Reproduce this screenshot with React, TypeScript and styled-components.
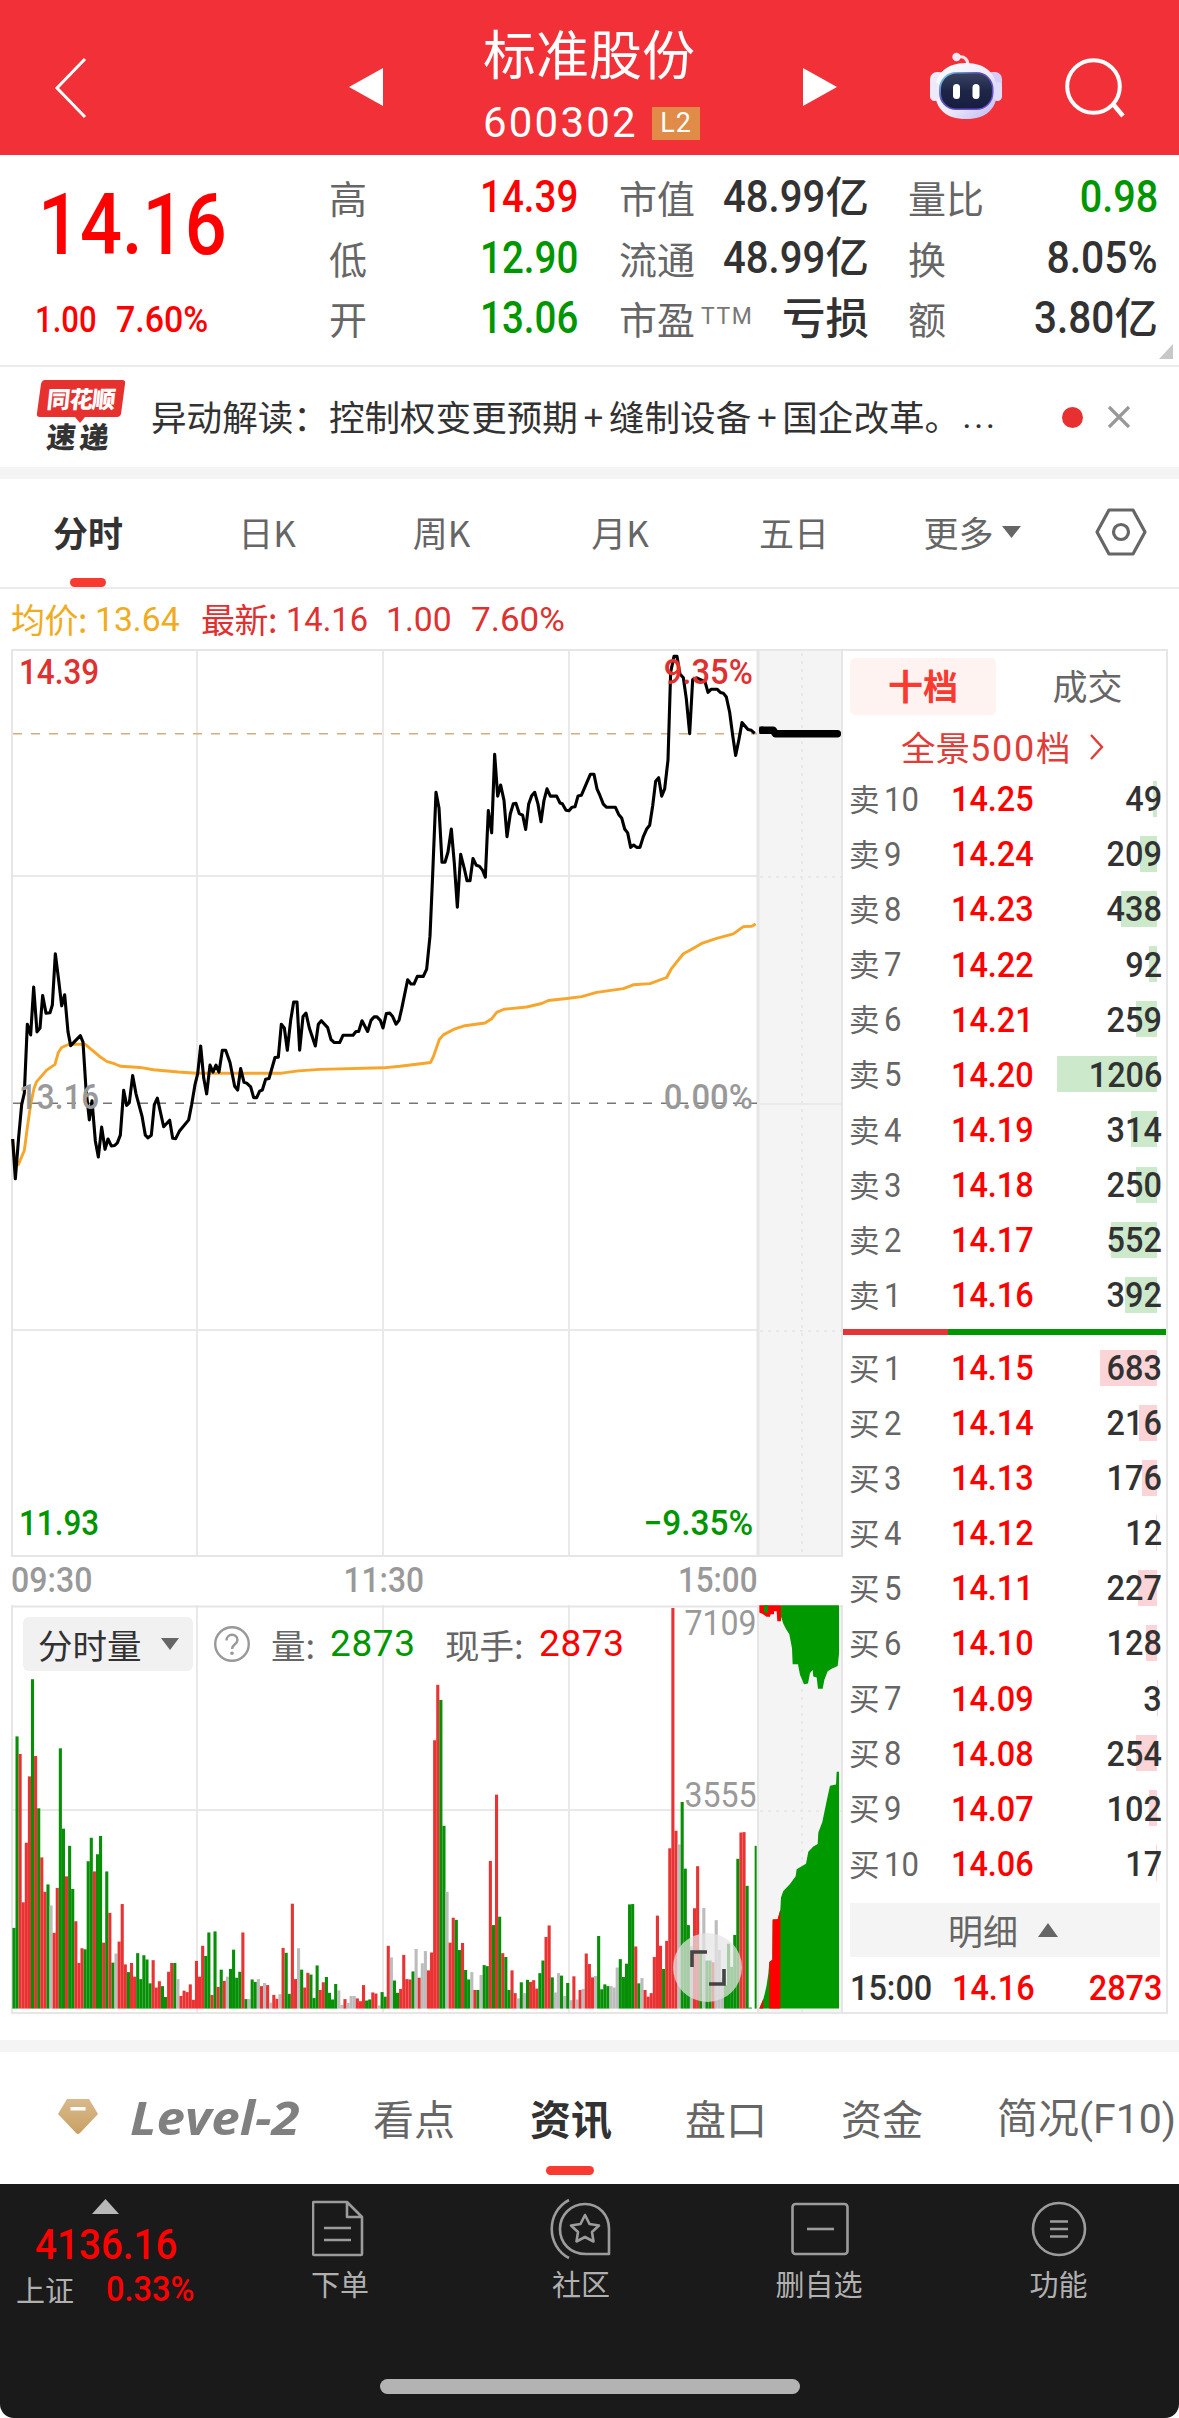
import React from 'react';
import styled, { createGlobalStyle, css } from 'styled-components';

const RED = '#ff0000';
const GREEN = '#009600';
const INK = '#323232';
const MUTED = '#666';
const LINE = '#e9e9e9';
const CJK = "'Noto Sans CJK SC', sans-serif";
const NUM = "Roboto, 'Noto Sans CJK SC', sans-serif";

const Global = createGlobalStyle`
  * { box-sizing: border-box; }
  html, body { margin: 0; padding: 0; background: #fff; }
  body { width: 1179px; font-family: ${CJK}; color: ${INK}; }
  svg { display: block; flex: none; }
`;

const Screen = styled.div`
  width: 1179px;
  height: 2418px;
  display: flex;
  flex-direction: column;
  overflow: hidden;
  background: #fff;
`;

/* Numerals: Roboto narrowed towards a DIN-like proportion. */
const Num = styled.span<{ $size: number; $sx?: number; $color?: string; $w?: number; $ml?: number; $right?: boolean; $center?: boolean }>`
  display: inline-block;
  font-family: ${NUM};
  font-size: ${p => p.$size}px;
  line-height: 1;
  font-weight: ${p => p.$w ?? 500};
  color: ${p => p.$color ?? INK};
  margin-left: ${p => p.$ml ?? 0}px;
  white-space: nowrap;
  transform: scaleX(${p => p.$sx ?? 0.9});
  transform-origin: ${p => (p.$center ? 'center' : p.$right ? 'right center' : 'left center')};
`;

/* ---------- header ---------- */
const Header = styled.header`
  height: 155px;
  flex: none;
  background: #f23037;
  color: #fff;
  display: grid;
  grid-template-columns: 349px 134px 320px 127px 249px;
`;
const BackCell = styled.div`padding: 57px 0 0 54px;`;
const ArrowCell = styled.div`padding-top: 68px;`;
const TitleCell = styled.div`display: flex; flex-direction: column;`;
const Title = styled.h1`
  margin: 23px 0 0;
  font-size: 53px;
  line-height: 58px;
  font-weight: 400;
  white-space: nowrap;
`;
const CodeRow = styled.div`display: flex; align-items: center; gap: 15px; margin-top: 20px; height: 44px;`;
const Code = styled.span`font-family: ${NUM}; font-size: 42px; letter-spacing: 2.2px; line-height: 44px; font-weight: 400; width: 154px;`;
const Badge = styled.span`
  width: 48px; height: 33px; line-height: 33px; background: #e08c48; text-align: center;
  font-family: ${NUM}; font-size: 27px; letter-spacing: 1px; font-weight: 400;
`;
const Tools = styled.div`display: flex;`;
const ToolIcon = styled.div<{ $ml?: number }>`padding-top: 50px; margin-left: ${p => p.$ml ?? 0}px;`;

/* ---------- quote ---------- */
const Quote = styled.section`
  position: relative;
  height: 212px;
  flex: none;
  border-bottom: 2px solid #ebebeb;
  display: grid;
  grid-template-columns: 329px 290px 289px 271px;
`;
const Last = styled.div`padding: 25px 0 0 38px; display: flex; flex-direction: column;`;
const Big = styled.div`height: 90px; display: flex; align-items: center;`;
const Changes = styled.div`display: grid; grid-template-columns: 81px 100px; margin: 32px 0 0 -3px; height: 36px; align-items: center;`;
const Stats = styled.div<{ $pr: number }>`
  display: flex; flex-direction: column; padding: 12px ${p => p.$pr}px 0 0;
`;
const Stat = styled.div`
  height: 60.5px; display: flex; justify-content: space-between; align-items: center;
`;
const StatLabel = styled.span`font-size: 38px; line-height: 56px; color: ${MUTED}; white-space: nowrap; display: flex;`;
const Sup = styled.sup`font-family: ${NUM}; font-size: 23px; line-height: 23px; margin: 15px 0 0 6px; font-weight: 400; letter-spacing: 1.5px; color: #777;`;
const StatValue = styled.span<{ $c?: string }>`
  font-family: ${NUM}; font-weight: 500; font-size: 44px; line-height: 52px; color: ${p => p.$c ?? INK};
  white-space: nowrap; display: flex; align-items: center;
`;
const Digits = styled.span<{ $sx?: number }>`transform: scaleX(${p => p.$sx ?? 0.875}); transform-origin: right center;`;
const Unit = styled.span`font-family: ${CJK}; font-size: 43.5px; line-height: 52px; font-weight: 500; margin-top: -5px;`;
const Corner = styled.svg`position: absolute; right: 6px; bottom: 6px;`;

/* ---------- news ticker ---------- */
const Ticker = styled.section`
  height: 100px; flex: none; display: flex; align-items: center; padding-left: 36px;
`;
const Brand = styled.div`position: relative; width: 90px; height: 74px; margin-right: 25px;`;
const BrandTop = styled.span`
  position: absolute; left: 11px; top: 0; color: #fff; font-weight: 900; font-size: 23.5px; line-height: 36px;
  transform: skewX(-6deg); letter-spacing: -0.8px; white-space: nowrap;
`;
const BrandBottom = styled.span`
  position: absolute; left: 11px; top: 39px; color: #333; font-weight: 900; font-size: 29px; line-height: 32px;
  transform: skewX(-6deg); letter-spacing: 4px; white-space: nowrap;
`;
const News = styled.p`margin: -2px 0 0; width: 848px; font-size: 35.6px; line-height: 50px; white-space: nowrap; overflow: hidden; display: flex;`;
const Plus = styled.span`width: 31px; text-align: center;`;
const Dots = styled.span`font-family: ${NUM}; letter-spacing: 2.4px; margin-left: 2px;`;
const Dot = styled.i`width: 21px; height: 21px; border-radius: 50%; background: #e93030; margin: 0 24px 0 63px;`;

const Band = styled.div`height: 12px; flex: none; background: #f4f4f4;`;

/* ---------- period tabs ---------- */
const Tabs = styled.nav`
  height: 110px; flex: none; border-bottom: 2px solid #ebebeb; display: grid;
  grid-template-columns: 176px 182px 167px 190px 158px 198px 99px;
`;
const Tab = styled.div<{ $on?: boolean }>`
  position: relative; display: flex; justify-content: center; align-items: center; gap: 8px;
  font-size: 35px; line-height: 50px; padding-bottom: 3px; color: ${p => (p.$on ? INK : MUTED)}; font-weight: ${p => (p.$on ? 700 : 400)};
  ${p => p.$on && css`
    &::after { content: ''; position: absolute; left: 70px; bottom: 0; width: 36px; height: 9px; border-radius: 5px; background: #f93a30; }
  `}
`;

const Legend = styled.div`
  height: 60px; flex: none; display: grid; grid-template-columns: 72px 108px 84px 101px 84px 110px;
  align-items: center; padding: 0 0 1px 11px; white-space: nowrap;
`;
const LegendText = styled.span<{ $c: string; $ml?: number }>`font-size: 34px; line-height: 44px; letter-spacing: -0.5px; color: ${p => p.$c}; margin-left: ${p => p.$ml ?? 0}px;`;

/* ---------- main area ---------- */
const Main = styled.main`height: 1391px; flex: none; display: flex; padding-left: 11px;`;
const Charts = styled.div`width: 832px; flex: none; display: flex; flex-direction: column;`;
const PriceBox = styled.div`position: relative; height: 908px;`;
const Axis = styled.div`height: 48px; padding-bottom: 1px; display: grid; grid-template-columns: 248px 248px 251px; align-items: center;`;
const AxisCell = styled.div<{ $a: string }>`display: flex; justify-content: ${p => p.$a};`;
const VolBox = styled.div`position: relative; height: 410px;`;
const Tag = styled.div<{ $y: number; $left?: number; $right?: number }>`
  position: absolute; top: ${p => p.$y}px; height: 34px; line-height: 34px; display: flex; align-items: center;
  ${p => (p.$left !== undefined ? `left: ${p.$left}px;` : `right: ${p.$right}px;`)}
`;
const VolHead = styled.div`
  position: absolute; left: 12px; top: 12px; height: 54px; display: flex; align-items: center; white-space: nowrap;
`;
const Picker = styled.button`
  width: 170px; height: 54px; border: 0; border-radius: 6px; background: #f1f1f1; padding: 0 14px 0 15px; margin: 0;
  display: flex; align-items: center; justify-content: space-between; color: ${INK}; font-family: ${CJK}; font-size: 34.5px; line-height: 50px;
`;
const VolLabel = styled.span<{ $ml: number; $w: number }>`margin-left: ${p => p.$ml}px; width: ${p => p.$w}px; font-size: 34.5px; line-height: 50px; color: ${MUTED};`;
const VolValue = styled.span<{ $c: string }>`font-family: ${NUM}; font-size: 37px; line-height: 50px; letter-spacing: 0.6px; width: 84px; color: ${p => p.$c};`;
const Help = styled.svg`margin-left: 20px;`;
const Expand = styled.div`
  position: absolute; left: 662px; top: 328px; width: 69px; height: 69px; border-radius: 50%;
  background: rgba(228, 228, 228, 0.72); display: flex; align-items: center; justify-content: center;
`;

/* ---------- order book ---------- */
const Book = styled.aside`
  width: 325px; flex: none; height: 1365px; border: 2px solid #e6e6e6; border-left-width: 0; border-right-width: 2px;
`;
const BookTabs = styled.div`height: 71px; display: grid; grid-template-columns: 146px 1fr; padding: 7px 0 7px 7px;`;
const BookTab = styled.div<{ $on?: boolean }>`
  display: flex; align-items: center; justify-content: center; font-size: 35px; line-height: 54px; border-radius: 5px; padding-bottom: 3px;
  background: ${p => (p.$on ? '#fff3f2' : 'transparent')}; color: ${p => (p.$on ? '#f93a30' : MUTED)}; font-weight: ${p => (p.$on ? 700 : 400)};
  padding-left: ${p => (p.$on ? 0 : 13)}px;
`;
const Panorama = styled.div`
  height: 50px; display: flex; align-items: center; padding-left: 58px; gap: 18px; color: #e33b36; font-size: 34.5px; line-height: 50px; white-space: nowrap;
`;
const Five = styled.span`font-family: ${NUM}; font-size: 36px; font-weight: 400; letter-spacing: 1.8px;`;
const Row = styled.div`position: relative; height: 55.08px; display: grid; grid-template-columns: 35px 66px 1fr 4px; align-items: center; padding-left: 6px;`;
const Side = styled.span`font-size: 30.5px; line-height: 50px; color: ${MUTED}; margin-top: -3px;`;
const Qty = styled.span`position: relative; display: flex; justify-content: flex-end; width: 100%;`;
const PriceQty = styled.div`display: grid; grid-template-columns: 88px 1fr; align-items: center;`;
const Fill = styled.i<{ $buy?: boolean }>`
  position: absolute; right: 9px; top: 9px; height: 36px; background: ${p => (p.$buy ? '#fad4d6' : '#cce9cc')};
`;
const Ratio = styled.div`height: 6px; background: linear-gradient(90deg, #e33535 105px, ${GREEN} 105px); margin: 6px 0;`;
const Detail = styled.div`
  height: 54px; margin: 11px 6px 0 7px; background: #f4f4f4; color: ${MUTED}; font-size: 35px; line-height: 54px;
  display: flex; align-items: center; justify-content: center; gap: 20px; padding-right: 4px;
`;
const Tick = styled.div`height: 60px; display: grid; grid-template-columns: 101px 88px 1fr 4px; align-items: center; padding: 4px 0 0 7px;`;
const TickQty = styled.span`display: flex; justify-content: flex-end;`;

/* ---------- lower tabs ---------- */
const InfoTabs = styled.nav`
  height: 132px; flex: none; display: grid; grid-template-columns: 130px 243px 157px 155px 156px 156px 182px; align-items: center; white-space: nowrap;
  font-size: 41px; line-height: 60px; color: ${MUTED}; padding-bottom: 2px;
`;
const GemCell = styled.div`padding-left: 58px;`;
const LevelTwo = styled.span`font-family: 'Open Sans', sans-serif; font-weight: 700; font-style: italic; font-size: 47px; color: #808080; transform: scaleX(1.09); transform-origin: left;`;
const InfoTab = styled.span<{ $on?: boolean }>`
  position: relative; ${p => p.$on && css`
    color: ${INK}; font-weight: 700;
    &::after { content: ''; position: absolute; left: 16px; bottom: -28px; width: 48px; height: 9px; border-radius: 5px; background: #f93a30; }
  `}
`;
const F10 = styled.span`font-family: ${NUM}; font-size: 41px; font-weight: 400; letter-spacing: 0;`;

/* ---------- bottom bar ---------- */
const Bottom = styled.footer`
  height: 234px; flex: none; background: #1a1a1a; border-radius: 0 0 14px 14px; display: flex; flex-direction: column; align-items: center; justify-content: space-between;
  padding-bottom: 24px;
`;
const BottomRow = styled.div`width: 1179px; height: 140px; display: grid; grid-template-columns: 222px 236px 246px 230px 249px;`;
const Index = styled.div`display: flex; flex-direction: column; padding: 15px 0 0 0;`;
const IndexTri = styled.svg`margin-left: 92px;`;
const IndexNum = styled.div`height: 46px; padding-left: 35px; margin-top: 8px; display: flex; align-items: center;`;
const IndexLine = styled.div`display: grid; grid-template-columns: 90px 100px; padding-left: 16px; margin-top: 2px; align-items: center; height: 38px; color: #b0b0b0; font-size: 29px; line-height: 38px;`;
const Action = styled.div`display: flex; flex-direction: column; align-items: center; padding-top: 14px; color: #b0b0b0; font-size: 29px; line-height: 40px; gap: 3px;`;
const HomeBar = styled.div`width: 420px; height: 15px; border-radius: 8px; background: #b3b3b3;`;

/* ---------- data ---------- */
const SELL: [number, string, number][] = [
  [10, '14.25', 49], [9, '14.24', 209], [8, '14.23', 438], [7, '14.22', 92], [6, '14.21', 259],
  [5, '14.20', 1206], [4, '14.19', 314], [3, '14.18', 250], [2, '14.17', 552], [1, '14.16', 392],
];
const BUY: [number, string, number][] = [
  [1, '14.15', 683], [2, '14.14', 216], [3, '14.13', 176], [4, '14.12', 12], [5, '14.11', 227],
  [6, '14.10', 128], [7, '14.09', 3], [8, '14.08', 254], [9, '14.07', 102], [10, '14.06', 17],
];

/* Minute price and average, in plot units. */
const PRICE =
  '38,1330 46,1434 56,1325 65,1240 73,1210 82,1030 92,1058 101,933 111,1050 120,1040 128,955 138,1001 150,1000 157,980 166,846 176,915 185,982 194,953 204,1050 212,1086 241,1060 249,1077 258,1200 268,1280 276,1230 286,1335 295,1377 305,1299 315,1357 324,1330 334,1348 344,1347 352,1340 361,1320 371,1203 380,1242 388,1235 398,1164 408,1212 426,1270 436,1320 444,1327 454,1320 463,1240 472,1223 491,1298 509,1281 518,1328 527,1329 538,1310 566,1280 575,1240 585,1188 593,1160 602,1087 611,1170 620,1212 630,1137 639,1155 648,1137 657,1155 667,1098 677,1098 690,1130 704,1192 713,1202 722,1146 732,1182 740,1184 752,1194 761,1222 770,1222 779,1205 787,1202 797,1174 807,1172 825,1117 835,1116 844,1030 853,1040 862,1098 872,1020 881,972 891,972 899,1098 909,1010 918,1001 928,1040 946,1087 955,1030 964,1021 983,1039 993,1070 1003,1078 1019,1078 1029,1059 1059,1059 1068,1049 1076,1049 1086,1021 1103,1049 1113,1020 1122,1011 1131,1011 1141,1020 1149,1040 1159,1002 1169,1001 1178,1010 1188,1030 1197,1020 1205,990 1223,914 1233,925 1242,925 1252,905 1270,905 1280,886 1290,800 1298,640 1308,424 1317,465 1326,607 1335,607 1344,580 1354,520 1363,610 1372,724 1382,586 1392,620 1401,655 1410,655 1419,597 1429,615 1438,617 1448,628 1456,646 1465,472 1475,530 1484,325 1493,434 1502,405 1512,445 1521,540 1531,480 1540,454 1548,453 1558,480 1568,484 1577,521 1586,455 1595,433 1604,424 1614,455 1623,501 1632,445 1641,415 1651,434 1670,434 1680,452 1687,454 1698,471 1707,472 1716,463 1725,462 1734,434 1744,432 1771,377 1782,377 1791,415 1800,433 1810,455 1819,463 1846,463 1856,482 1865,491 1874,520 1883,530 1892,568 1901,562 1910,568 1920,568 1930,540 1940,520 1949,510 1958,460 1967,395 1976,386 1985,434 1994,415 2004,340 2012,110 2022,69 2031,69 2040,115 2050,125 2059,180 2069,271 2078,130 2090,125 2115,135 2124,163 2133,155 2152,155 2161,163 2170,165 2179,175 2189,215 2198,275 2207,328 2217,285 2226,242 2244,260 2254,262 2264,270';
const AVERAGE =
  '38,1330 45,1390 55,1397 73,1360 82,1300 92,1240 102,1198 110,1180 140,1150 165,1135 175,1104 185,1091 205,1083 255,1082 297,1113 320,1127 345,1134 362,1140 420,1143 460,1149 535,1155 590,1158 845,1158 895,1152 960,1148 1150,1144 1200,1140 1292,1130 1300,1115 1318,1070 1330,1058 1365,1042 1395,1034 1455,1027 1475,1016 1490,999 1512,991 1580,985 1625,976 1645,968 1700,963 1745,958 1790,947 1870,937 1900,927 1950,924 2000,908 2015,884 2050,846 2070,837 2105,819 2150,806 2200,794 2230,775 2255,774 2267,768';

/* One entry per minute: direction (R up, G down, N flat) and bar top in plot units. */
const VOLUME = (
  'G1277 G731 R781 R1204 R1034 R845 G568 R787 G936 R1076 R1174 G1153 N1213 R1291 R1163 G765 G994 R1130 G1043 G1166 R1258 R1377 R1335 G1338 G1087 G1020 R1116 G1067 G1015 R1319 G1116 R1234 G1376 N1350 R1316 R1209 R1381 G1403 R1377 R1416 G1349 G1423 G1355 G1367 G1435 R1369 R1447 R1429 G1443 G1474 R1402 R1377 G1377 N1423 R1471 R1456 R1460 R1438 R1482 R1371 R1416 R1328 G1357 G1290 R1468 G1287 R1445 G1396 R1428 N1416 G1394 G1339 G1419 G1402 R1290 G1480 N1480 G1424 G1431 N1423 R1443 N1434 R1440 N1490 R1468 R1479 N1466 R1334 G1348 G1465 R1208 R1423 N1335 G1396 R1447 R1405 G1410 G1477 G1384 R1454 R1432 G1417 G1462 G1481 G1437 N1455 N1497 R1480 N1491 N1471 N1471 R1478 R1486 R1440 G1484 G1481 R1461 R1464 N1498 G1460 G1473 R1328 N1361 G1427 G1462 R1451 R1354 R1423 R1424 G1401 N1337 R1419 N1378 N1343 R1398 R1347 R742 R584 G627 G986 N1174 R1319 R1248 G1254 G1340 R1320 G1397 G1424 N1403 R1454 G1454 N1411 G1383 G1386 R1086 G1269 R897 G1245 R1349 G1360 G1454 R1398 R1463 N1478 G1432 N1463 G1425 R1431 R1426 R1450 G1406 G1370 R1303 R1270 G1418 N1461 N1406 G1413 N1471 G1434 N1483 R1415 N1481 R1454 N1451 R1350 R1380 R1418 N1414 G1300 G1452 G1438 G1443 N1443 N1447 N1390 G1366 G1417 G1379 G1210 G1209 R1330 G1435 N1420 R1454 R1473 R1463 R1360 R1242 R1328 G1394 R1314 R1050 R365 R1000 N1039 G918 G1108 G1269 N1330 R1221 R1101 G1340 N1220 G1370 G1370 R1375 N1255 N1340 N1420 G1440 G1322 G1388 G1297 G1080 R1005 R1004 G1157 G1504'
).split(' ');
const BAR_COLOR: Record<string, string> = { R: '#e93333', G: '#079007', N: '#bcbcbc' };

const grid = (h: number, ys: number[]) => (
  <g stroke={LINE} strokeWidth="2">
    {[186, 372, 558].map(x => <line key={x} x1={x} x2={x} y1={0} y2={h} />)}
    {ys.map(y => <line key={y} x1={0} x2={746} y1={y} y2={y} />)}
  </g>
);

const PriceChart = () => (
  <svg width="832" height="908" viewBox="0 0 832 908">
    <rect x="747" y="0" width="84" height="908" fill="#f4f4f4" />
    {grid(908, [227, 681])}
    <g stroke="#e8e8e8" strokeWidth="2" strokeDasharray="3 5">
      <line x1="791" x2="791" y1="4" y2="908" />
      <line x1="749" x2="830" y1="228" y2="228" />
      <line x1="749" x2="830" y1="682" y2="682" />
    </g>
    <line x1="749" x2="830" y1="455" y2="455" stroke="#eaeaea" strokeWidth="2" />
    <g fill="none" stroke="#e6e6e6" strokeWidth="2">
      <path d="M0 1H832M1 0V908M0 907H830M831 0V908" />
      <path d="M747 0V908" strokeWidth="3" />
    </g>
    <line x1="2" x2="746" y1="84.700" y2="84.700" stroke="#cfb07c" strokeWidth="1.600" strokeDasharray="9 9" />
    <line x1="2" x2="746" y1="454.200" y2="454.200" stroke="#777" strokeWidth="1.500" strokeDasharray="9 9" />
    <g transform="translate(-11 -19) scale(0.33333 0.38271)" fill="none" strokeLinejoin="round">
      <polyline points={AVERAGE} stroke="#f7a52b" strokeWidth="2.900" vectorEffect="non-scaling-stroke" />
      <polyline points={PRICE} stroke="#000" strokeWidth="3.100" vectorEffect="non-scaling-stroke" />
      <polyline points="2288,262 2320,262 2326,271 2512,271" stroke="#000" strokeWidth="7.500" strokeLinecap="round" vectorEffect="non-scaling-stroke" />
      <polyline points="2278,262 2290,262" stroke="#000" strokeWidth="7.500" vectorEffect="non-scaling-stroke" />
    </g>
  </svg>
);

const VolumeChart = () => (
  <svg width="832" height="410" viewBox="0 0 832 410">
    <rect x="747" y="0" width="84" height="408" fill="#f4f4f4" />
    {grid(408, [205])}
    <g stroke="#e8e8e8" strokeWidth="2" strokeDasharray="3 5">
      <line x1="791" x2="791" y1="4" y2="408" />
      <line x1="749" x2="830" y1="206" y2="206" />
    </g>
    <path d="M0 1.500H832M1 0V408M0 408H832M831 0V408M747 0V408" fill="none" stroke="#e6e6e6" strokeWidth="2" />
    <g transform="translate(-11 -125) scale(0.33333 0.35075)">
      {VOLUME.map((v, i) => {
        const top = Number(v.slice(1));
        return <rect key={i} x={37.2 + i * 9.281} y={top} width="9.3" height={1507 - top} fill={BAR_COLOR[v[0]]} />;
      })}
      <rect x="2264" y="1043" width="6" height="464" fill="#079007" />
      <path fill="#009900" d="M2278 1507 L2290 1480 L2295 1462 L2300 1440 L2305 1408 L2308 1374 L2317 1368 L2318 1253 L2333 1252 L2341 1225 L2343 1190 L2350 1172 L2370 1152 L2387 1130 L2390 1110 L2418 1094 L2425 1060 L2440 1045 L2453 1038 L2455 1005 L2467 975 L2480 915 L2490 872 L2508 868 L2510 832 L2517 832 V1507Z" />
      <path fill="#ff0000" d="M2308 1507V1374L2317 1368L2318 1253L2333 1252L2341 1225V1507ZM2278 1507L2290 1480V1507Z" />
      <path fill="#009900" d="M2343 357H2517V497L2513 530L2495 538L2483 545L2473 570L2468 595H2454L2450 563L2440 560L2438 542L2430 550L2424 580L2412 582L2400 555L2394 525H2378L2376 480L2368 440L2358 425L2350 410L2343 390Z" />
      <path fill="#ff0000" d="M2278 357V378L2288 382L2300 390H2310L2312 383H2322V374H2330L2332 403H2343V357Z" />
      <rect x="2292" y="357" width="12" height="21" fill="#009900" />
    </g>
  </svg>
);

const Triangle = ({ w, h, dir, fill }: { w: number; h: number; dir: 'l' | 'r' | 'u' | 'd'; fill: string }) => {
  const d = { l: `M${w} 0V${h}L0 ${h / 2}Z`, r: `M0 0V${h}L${w} ${h / 2}Z`, u: `M0 ${h}H${w}L${w / 2} 0Z`, d: `M0 0H${w}L${w / 2} ${h}Z` }[dir];
  return <svg width={w} height={h}><path d={d} fill={fill} /></svg>;
};

const Robot = () => (
  <svg width="76" height="72" viewBox="0 0 76 72">
    <defs>
      <linearGradient id="shell" x1="0" y1="0" x2="1" y2="1"><stop offset="0" stopColor="#fff" /><stop offset=".55" stopColor="#eceafa" /><stop offset="1" stopColor="#bdb4f2" /></linearGradient>
      <linearGradient id="rim" x1="0" y1="0" x2="1" y2="1"><stop offset="0" stopColor="#7ee6f0" /><stop offset=".4" stopColor="#5b50b8" /><stop offset="1" stopColor="#6a4fe0" /></linearGradient>
      <linearGradient id="visor" x1="0" y1="0" x2="0" y2="1"><stop offset="0" stopColor="#3a4160" /><stop offset=".5" stopColor="#1e2648" /><stop offset="1" stopColor="#171d40" /></linearGradient>
    </defs>
    <path d="M28 7C34 6 37 8 38 14" fill="none" stroke="#fbe3ea" strokeWidth="3.200" />
    <circle cx="26.500" cy="7" r="4.200" fill="#f3e9f6" />
    <rect x="0" y="22" width="16" height="19" rx="7" fill="#eeeafa" transform="translate(0 0)" />
    <rect x="56" y="22" width="16" height="19" rx="7" fill="#d5cdf7" />
    <path d="M36 13C56 13 67 24 67 41C67 59 56 69 36 69C16 69 5 59 5 41C5 24 16 13 36 13Z" fill="url(#shell)" />
    <rect x="0" y="32" width="9" height="19" rx="4.500" fill="#eeeafa" />
    <rect x="63" y="32" width="9" height="19" rx="4.500" fill="#e2dcfb" />
    <rect x="9" y="22" width="54.500" height="38" rx="17" fill="url(#rim)" />
    <rect x="11" y="23.500" width="51" height="35" rx="15.500" fill="url(#visor)" />
    <rect x="23" y="34" width="7" height="15" rx="3.500" fill="#fff" />
    <rect x="42.500" y="34" width="7" height="15" rx="3.500" fill="#fff" />
  </svg>
);

const stroke = { fill: 'none', stroke: '#9c9c9c', strokeWidth: 2.6, strokeLinejoin: 'round' as const };

const BookRow = ({ side, n, price, qty }: { side: string; n: number; price: string; qty: number }) => (
  <Row>
    <Fill $buy={side === '买'} style={{ width: qty / 12.06 }} />
    <Side>{side}</Side>
    <Num $size={33} $sx={0.94} $w={400} $color={MUTED}>{n}</Num>
    <PriceQty>
      <Num $size={34.5} $sx={0.94} $color={RED} $ml={1}>{price}</Num>
      <Qty><Num $size={34.5} $sx={0.94} $right>{qty}</Num></Qty>
    </PriceQty>
  </Row>
);

export default function App() {
  return (
    <Screen>
      <Global />
      <Header>
        <BackCell><svg width="34" height="62"><path d="M31 2L3 31L31 60" fill="none" stroke="#fff" strokeWidth="3" /></svg></BackCell>
        <ArrowCell><Triangle w={34} h={38} dir="l" fill="#fff" /></ArrowCell>
        <TitleCell>
          <Title>标准股份</Title>
          <CodeRow><Code>600302</Code><Badge>L2</Badge></CodeRow>
        </TitleCell>
        <ArrowCell><Triangle w={34} h={38} dir="r" fill="#fff" /></ArrowCell>
        <Tools>
          <ToolIcon><Robot /></ToolIcon>
          <ToolIcon $ml={59}>
            <svg width="62" height="72" viewBox="0 0 62 72"><g fill="none" stroke="#fff"><circle cx="28.500" cy="36.500" r="26.300" strokeWidth="4" /><path d="M48 54L58 66" strokeWidth="4.500" /></g></svg>
          </ToolIcon>
        </Tools>
      </Header>

      <Quote>
        <Last>
          <Big><Num $size={85} $sx={0.87} $color={RED}>14.16</Num></Big>
          <Changes>
            <Num $size={36.5} $sx={0.85} $color={RED}>1.00</Num>
            <Num $size={36.5} $sx={0.93} $color={RED}>7.60%</Num>
          </Changes>
        </Last>
        <Stats $pr={41}>
          <Stat><StatLabel>高</StatLabel><StatValue $c={RED}><Digits>14.39</Digits></StatValue></Stat>
          <Stat><StatLabel>低</StatLabel><StatValue $c={GREEN}><Digits>12.90</Digits></StatValue></Stat>
          <Stat><StatLabel>开</StatLabel><StatValue $c={GREEN}><Digits>13.06</Digits></StatValue></Stat>
        </Stats>
        <Stats $pr={39}>
          <Stat><StatLabel>市值</StatLabel><StatValue><Digits $sx={0.91}>48.99</Digits><Unit>亿</Unit></StatValue></Stat>
          <Stat><StatLabel>流通</StatLabel><StatValue><Digits $sx={0.91}>48.99</Digits><Unit>亿</Unit></StatValue></Stat>
          <Stat><StatLabel>市盈<Sup>TTM</Sup></StatLabel><StatValue><Unit>亏损</Unit></StatValue></Stat>
        </Stats>
        <Stats $pr={21}>
          <Stat><StatLabel>量比</StatLabel><StatValue $c={GREEN}><Digits $sx={0.9}>0.98</Digits></StatValue></Stat>
          <Stat><StatLabel>换</StatLabel><StatValue><Digits $sx={0.93}>8.05%</Digits></StatValue></Stat>
          <Stat><StatLabel>额</StatLabel><StatValue><Digits $sx={0.92}>3.80</Digits><Unit>亿</Unit></StatValue></Stat>
        </Stats>
        <Corner width="14" height="15"><path d="M14 0V15H0Z" fill="#c8c8c8" /></Corner>
      </Quote>

      <Ticker>
        <Brand>
          <svg width="90" height="44"><path d="M9 0H86Q90 0 89 4L85 34Q84 37 81 37H49L44 43L39 37H4Q0 37 1 33L5 4Q6 0 9 0Z" fill="#e6312f" /></svg>
          <BrandTop>同花顺</BrandTop>
          <BrandBottom>速递</BrandBottom>
        </Brand>
        <News>异动解读：控制权变更预期<Plus>+</Plus>缝制设备<Plus>+</Plus>国企改革。<Dots>...</Dots></News>
        <Dot />
        <svg width="24" height="24"><path d="M2 2L22 22M22 2L2 22" stroke="#999" strokeWidth="3.200" /></svg>
      </Ticker>
      <Band />

      <Tabs>
        <Tab $on>分时</Tab>
        <Tab>日K</Tab>
        <Tab>周K</Tab>
        <Tab>月K</Tab>
        <Tab>五日</Tab>
        <Tab>更多<Triangle w={19} h={12} dir="d" fill="#666" /></Tab>
        <Tab>
          <svg width="52" height="48" viewBox="0 0 52 48"><g fill="none" stroke="#666" strokeWidth="3.200" strokeLinejoin="round"><path d="M14 2H38L50 24L38 46H14L2 24Z" /><circle cx="26" cy="24" r="7.500" /></g></svg>
        </Tab>
      </Tabs>

      <Legend>
        <LegendText $c="#f0ac1e">均价:</LegendText>
        <Num $size={34} $sx={0.99} $w={400} $color="#f0ac1e" $ml={12}>13.64</Num>
        <LegendText $c="#e0302f" $ml={10}>最新:</LegendText>
        <Num $size={34} $sx={0.96} $w={400} $color="#e0302f" $ml={11}>14.16</Num>
        <Num $size={34} $sx={0.99} $w={400} $color="#e0302f" $ml={10}>1.00</Num>
        <Num $size={34} $sx={1.03} $w={400} $color="#e0302f" $ml={11}>7.60%</Num>
      </Legend>

      <Main>
        <Charts>
          <PriceBox>
            <PriceChart />
            <Tag $y={6} $left={8}><Num $size={34.5} $sx={0.91} $color="#e0302f">14.39</Num></Tag>
            <Tag $y={6} $right={90}><Num $size={34.5} $sx={0.95} $color="#e0302f" $right>9.35%</Num></Tag>
            <Tag $y={431} $left={8}><Num $size={34.5} $sx={0.91} $color="#999">13.16</Num></Tag>
            <Tag $y={431} $right={90}><Num $size={34.5} $sx={0.95} $color="#999" $right>0.00%</Num></Tag>
            <Tag $y={857} $left={8}><Num $size={34.5} $sx={0.91} $color={GREEN}>11.93</Num></Tag>
            <Tag $y={857} $right={90}><Num $size={34.5} $sx={0.97} $color={GREEN} $right>−9.35%</Num></Tag>
          </PriceBox>
          <Axis>
            <AxisCell $a="flex-start"><Num $size={34.5} $sx={0.93} $color="#999">09:30</Num></AxisCell>
            <AxisCell $a="center"><Num $size={34.5} $sx={0.92} $color="#999" $center $ml={2}>11:30</Num></AxisCell>
            <AxisCell $a="flex-end"><Num $size={34.5} $sx={0.91} $color="#999" $right>15:00</Num></AxisCell>
          </Axis>
          <VolBox>
            <VolumeChart />
            <Tag $y={1} $right={86}><Num $size={34.5} $sx={0.93} $w={400} $color="#999" $right>7109</Num></Tag>
            <Tag $y={173} $right={86}><Num $size={34.5} $sx={0.93} $w={400} $color="#999" $right>3555</Num></Tag>
            <VolHead>
              <Picker>分时量<Triangle w={18} h={12} dir="d" fill="#666" /></Picker>
              <Help width="38" height="38" viewBox="0 0 38 38">
                <circle cx="19" cy="19" r="16.800" fill="none" stroke="#999" strokeWidth="2.400" />
                <path d="M13.500 15.500C13.500 8 24.500 8 24.500 15C24.500 19.500 19 19 19 24" fill="none" stroke="#999" strokeWidth="2.400" /><circle cx="19" cy="28.300" r="1.800" fill="#999" />
              </Help>
              <VolLabel $ml={20} $w={59}>量:</VolLabel><VolValue $c={GREEN}>2873</VolValue>
              <VolLabel $ml={31} $w={94}>现手:</VolLabel><VolValue $c={RED}>2873</VolValue>
            </VolHead>
            <Expand><svg width="36" height="36"><path d="M2 17V2H17M34 19V34H19" fill="none" stroke="#444" strokeWidth="3.600" /></svg></Expand>
          </VolBox>
        </Charts>

        <Book>
          <BookTabs><BookTab $on>十档</BookTab><BookTab>成交</BookTab></BookTabs>
          <Panorama>
            <span>全景<Five>500</Five>档</span>
            <svg width="16" height="28"><path d="M2 2L13 14L2 26" fill="none" stroke="#e33b36" strokeWidth="2.400" /></svg>
          </Panorama>
          {SELL.map(([n, p, q]) => <BookRow key={n} side="卖" n={n} price={p} qty={q} />)}
          <Ratio />
          {BUY.map(([n, p, q]) => <BookRow key={n} side="买" n={n} price={p} qty={q} />)}
          <Detail>明细<Triangle w={20} h={14} dir="u" fill="#666" /></Detail>
          <Tick>
            <Num $size={34.5} $sx={0.94}>15:00</Num>
            <Num $size={34.5} $sx={0.94} $color={RED} $ml={1}>14.16</Num>
            <TickQty><Num $size={34.5} $sx={0.94} $color={RED} $right>2873</Num></TickQty>
          </Tick>
        </Book>
      </Main>
      <Band />

      <InfoTabs>
        <GemCell>
          <svg width="41" height="36" viewBox="0 0 41 36">
            <defs><linearGradient id="gem" x1="0" y1="0" x2="0" y2="1"><stop offset="0" stopColor="#d8b98c" /><stop offset="1" stopColor="#c9a063" /></linearGradient></defs>
            <path d="M9 0H31L40 15L22 34Q20 36 18 34L0 15Z" fill="url(#gem)" /><rect x="12.500" y="8" width="15" height="3.500" fill="#fff" />
          </svg>
        </GemCell>
        <LevelTwo>Level-2</LevelTwo>
        <InfoTab>看点</InfoTab>
        <InfoTab $on>资讯</InfoTab>
        <InfoTab>盘口</InfoTab>
        <InfoTab>资金</InfoTab>
        <InfoTab>简况<F10>(F10)</F10></InfoTab>
      </InfoTabs>

      <Bottom>
        <BottomRow>
          <Index>
            <IndexTri width="27" height="15"><path d="M0 15H27L13.500 0Z" fill="#b8b8b8" /></IndexTri>
            <IndexNum><Num $size={42} $sx={0.92} $color={RED}>4136.16</Num></IndexNum>
            <IndexLine><span>上证</span><Num $size={35} $sx={0.93} $color={RED}>0.33%</Num></IndexLine>
          </Index>
          <Action>
            <svg width="56" height="62" viewBox="0 0 56 62"><g {...stroke}><path d="M1.500 4H35L50 19V56Q50 57 49 57H2.500Q1 57 1 55.500V5Q1 4 2 4ZM35 4V19H50M12 30H39M12 42H39" /></g></svg>
            下单
          </Action>
          <Action>
            <svg width="62" height="62" viewBox="0 0 62 62"><g {...stroke}><path d="M19 2C-4 14 -4 48 19 60" /><path d="M59 56H36C20 56 10 45 10 31C10 17 21 6 35 6C49 6 59 17 59 31Z" /><path d="M35 17L39.500 26L49 27.500L42 34L43.500 43.500L35 39L26.500 43.500L28 34L21 27.500L30.500 26Z" /></g></svg>
            社区
          </Action>
          <Action>
            <svg width="60" height="62" viewBox="0 0 60 62"><g {...stroke}><rect x="5" y="6" width="55" height="50" rx="3" transform="translate(-1.500 0)" /><path d="M18 31H45" /></g></svg>
            删自选
          </Action>
          <Action>
            <svg width="56" height="62" viewBox="0 0 56 62"><g {...stroke}><circle cx="28" cy="31" r="26" /><path d="M19 23.500H37M19 31H37M19 38.500H37" /></g></svg>
            功能
          </Action>
        </BottomRow>
        <HomeBar />
      </Bottom>
    </Screen>
  );
}
